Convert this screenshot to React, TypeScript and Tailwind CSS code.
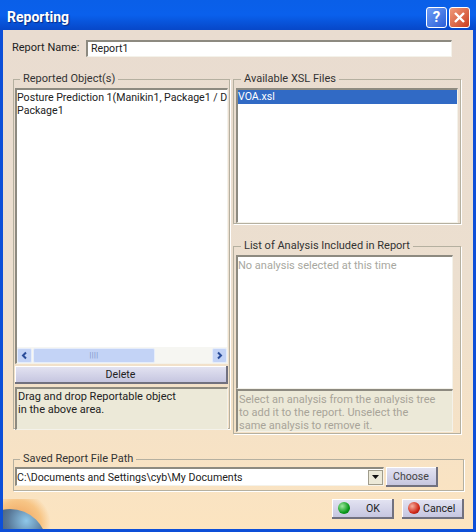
import React from "react";

const font = { fontFamily: 'Roboto, "Noto Sans", sans-serif' };

function Group({ title, className, children }: { title: string; className: string; children: React.ReactNode }) {
  return (
    <fieldset className={`min-w-0 border border-[#b5b0a0] shadow-[1px_1px_0_#fff] ${className}`}>
      <legend className="ml-[5px] px-[3px] text-[11px] leading-[12px] text-[#333]">{title}</legend>
      {children}
    </fieldset>
  );
}

const sunken = "border-t-2 border-l-2 border-t-[#8d8a80] border-l-[#8d8a80] border-r border-b border-r-[#f4f2ea] border-b-[#f4f2ea]";
const raised = "bg-gradient-to-b from-[#e4e4f2] to-[#c6c6e0] border-r-2 border-b-2 border-r-[#71717f] border-b-[#71717f] shadow-[inset_1px_1px_0_#fff]";

function Chevron({ left }: { left?: boolean }) {
  return (
    <div className="w-[15px] h-[15px] rounded-[2px] bg-[#c3d3f6] border border-[#e6edfb] flex items-center justify-center">
      <svg width="9" height="9" viewBox="0 0 9 9">
        <path d={left ? "M6 1.5 L3 4.5 L6 7.5" : "M3 1.5 L6 4.5 L3 7.5"} fill="none" stroke="#2a4d9a" strokeWidth="2" />
      </svg>
    </div>
  );
}

export default function App() {
  return (
    <div className="w-[476px] h-[532px] overflow-hidden bg-[#0d4fd8] flex flex-col relative text-[10.6px] leading-[13px] text-[#222]" style={font}>
      <div className="h-[30px] shrink-0 bg-gradient-to-b from-[#0a5fe8] via-[#0a60ec] to-[#0747c8] flex items-center justify-between pl-[7px] pr-[6px] pt-[4px]">
        <span className="text-[14px] font-bold text-white [text-shadow:1px_1px_1px_#0a2a80]">Reporting</span>
        <div className="flex gap-[2px]">
          <div className="w-[21px] h-[21px] rounded-[3px] border border-white bg-gradient-to-br from-[#6f9cf5] to-[#2a5ed8] flex items-center justify-center text-white font-bold text-[15px]">?</div>
          <div className="w-[21px] h-[21px] rounded-[3px] border border-white bg-gradient-to-br from-[#ef9a7a] to-[#c93a1c] flex items-center justify-center">
            <svg width="13" height="13" viewBox="0 0 13 13"><path d="M2 2 L11 11 M11 2 L2 11" stroke="#fff" strokeWidth="2.4" /></svg>
          </div>
        </div>
      </div>
      <div className="mx-[3px] mb-[3px] flex-1 relative bg-gradient-to-b from-[#e9dcd0] via-[#ecdfcf] to-[#fce4c0] pl-[10px] pr-[8px] flex flex-col">
        <div className="flex items-center h-[18px] mt-[9px]">
          <span className="w-[74px] -ml-px mb-[2px] whitespace-nowrap text-[11px]">Report Name:</span>
          <div className={`w-[366px] h-[17px] bg-white pl-[3px] flex items-center ${sunken} border-t border-l`}>Report1</div>
        </div>
        <div className="flex gap-[3px] mt-[16px]">
          <Group title="Reported Object(s)" className="w-[217px] h-[356px] px-px">
            <div className="flex flex-col">
              <div className={`h-[276px] mt-[3px] bg-white flex flex-col ${sunken}`}>
                <div className="flex-1 pt-[1px] overflow-hidden whitespace-nowrap">
                  <div>Posture Prediction 1(Manikin1, Package1 / D</div>
                  <div>Package1</div>
                </div>
                <div className="h-[16px] flex items-center bg-[#f6f6f2] gap-[1px]">
                  <Chevron left />
                  <div className="w-[122px] h-[15px] bg-[#c3d3f6] rounded-[2px] border border-[#e6edfb] flex items-center justify-center text-[#6f86c2] text-[7px] tracking-[0.5px]">||||</div>
                  <div className="flex-1" />
                  <Chevron />
                </div>
              </div>
              <div className={`h-[18px] mt-[2px] flex items-center justify-center ${raised}`}>Delete</div>
              <div className={`h-[43px] mt-[3px] bg-[#ece9d8] pl-[1px] pt-[1px] text-[11px] ${sunken}`}>
                Drag and drop Reportable object<br />in the above area.
              </div>
            </div>
          </Group>
          <div className="w-[228px] flex flex-col gap-[16px]">
            <Group title="Available XSL Files" className="h-[151px] px-[2px]">
              <div className={`h-[135px] mt-[3px] bg-white ${sunken}`}>
                <div className="h-[14px] bg-[#316ac5] text-white">VOA.xsl</div>
              </div>
            </Group>
            <Group title="List of Analysis Included in Report" className="h-[194px] pl-[2px] pr-[7px]">
              <div className={`h-[134px] mt-[3px] pt-[2px] bg-white text-[#a8a8a0] text-[11px] ${sunken}`}>No analysis selected at this time</div>
              <div className={`h-[43px] bg-[#ece9d8] text-[#a8a498] pl-[1px] pt-[2px] text-[11px] whitespace-nowrap ${sunken}`}>
                Select an analysis from the analysis tree<br />to add it to the report. Unselect the<br />same analysis to remove it.
              </div>
            </Group>
          </div>
        </div>
        <Group title="Saved Report File Path" className="w-[451px] h-[38px] mt-[19px] px-px">
          <div className="flex items-start gap-[2px] mt-[2px]">
            <div className={`w-[369px] h-[19px] bg-white flex items-center justify-between ${sunken}`}>
              <span>C:\Documents and Settings\cyb\My Documents</span>
              <div className="w-[15px] h-[15px] bg-[#ece9d8] border border-[#a09c8c] flex items-center justify-center">
                <svg width="7" height="4" viewBox="0 0 7 4"><path d="M0 0 H7 L3.5 4 Z" fill="#111" /></svg>
              </div>
            </div>
            <div className={`w-[52px] h-[20px] flex items-center justify-center text-[#444] ${raised}`}>Choose</div>
          </div>
        </Group>
        <div className="flex justify-end gap-[8px] mt-[8px] pr-[1px]">
          <div className={`w-[62px] h-[20px] flex items-center pl-[6px] gap-[16px] ${raised}`}>
            <span className="w-[12px] h-[12px] rounded-full bg-[radial-gradient(circle_at_35%_35%,#9fe89f,#0a9a1a_60%,#056010)]" />
            OK
          </div>
          <div className={`w-[62px] h-[20px] flex items-center pl-[6px] gap-[3px] ${raised}`}>
            <span className="w-[12px] h-[12px] rounded-full bg-[radial-gradient(circle_at_35%_35%,#f5b0a0,#d02818_60%,#801008)]" />
            Cancel
          </div>
        </div>
        <div className="absolute left-0 bottom-0 w-[50px] h-[30px] overflow-hidden pointer-events-none">
          <div className="absolute left-[-18px] top-[-8px] w-[66px] h-[66px] rounded-full bg-[radial-gradient(circle,#f0a050_30%,#f6b86c_50%,transparent_70%)] opacity-70" />
          <div className="absolute left-[-30px] top-[10px] w-[74px] h-[74px] rounded-full bg-[radial-gradient(circle_at_72%_16%,#8fc8ea,#5a7a9a_22%,#34404f_50%)]" />
        </div>
      </div>
    </div>
  );
}
